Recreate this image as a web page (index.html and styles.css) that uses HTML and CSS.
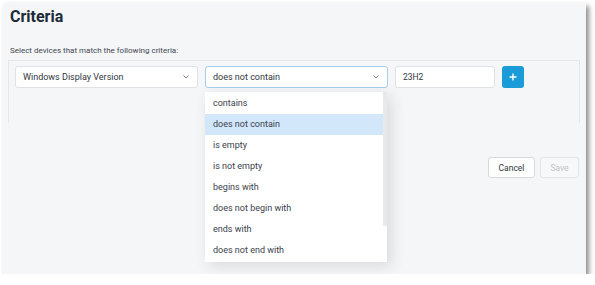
FILE: index.html
```html
<!DOCTYPE html>
<html>
<head>
<meta charset="utf-8">
<link rel="stylesheet" href="styles.css">
</head>
<body>
<div class="panel">
  <h1 class="title">Criteria</h1>
  <p class="subtitle">Select devices that match the following criteria:</p>
  <div class="criteria-box">
    <div class="row">
      <div class="select">
        <span>Windows Display Version</span>
        <svg class="chev" width="6" height="4" viewBox="0 0 6 4"><polyline points="0.5,0.5 3,3 5.5,0.5" fill="none" stroke="#7a8088" stroke-width="1"/></svg>
      </div>
      <div class="select-wrap">
        <div class="select focused">
          <span>does not contain</span>
          <svg class="chev" width="6" height="4" viewBox="0 0 6 4"><polyline points="0.5,0.5 3,3 5.5,0.5" fill="none" stroke="#7a8088" stroke-width="1"/></svg>
        </div>
        <div class="menu">
          <div class="menu-list">
            <div class="item">contains</div>
            <div class="item active">does not contain</div>
            <div class="item">is empty</div>
            <div class="item">is not empty</div>
            <div class="item">begins with</div>
            <div class="item">does not begin with</div>
            <div class="item">ends with</div>
            <div class="item">does not end with</div>
          </div>
          <div class="scroll"><div class="thumb"></div></div>
        </div>
      </div>
      <div class="input">23H2</div>
      <button class="add">
        <svg width="8" height="8" viewBox="0 0 8 8"><path d="M4 0.5V7.5M0.5 4H7.5" stroke="#fff" stroke-width="1.4"/></svg>
      </button>
    </div>
  </div>
  <div class="actions">
    <button class="btn cancel">Cancel</button>
    <button class="btn save">Save</button>
  </div>
</div>
</body>
</html>
```

FILE: styles.css
```css
* { box-sizing: border-box; }
html, body { margin: 0; padding: 0; background: #fff; }
body { font-family: Roboto, "Liberation Sans", sans-serif; }

.panel {
  margin: 3px 0 0 3px;
  width: 583px;
  height: 271px;
  background: #f5f6f8;
  box-shadow: 3px 3px 5px rgba(0,0,0,0.45);
  padding: 4px 6px 0 5px;
}

.title {
  margin: 0 0 0 2px;
  font-size: 16px;
  line-height: 20px;
  font-weight: 700;
  color: #1c2a37;
}

.subtitle {
  margin: 19px 0 0 2px;
  font-size: 8px;
  line-height: 10px;
  color: #3e4650;
}

.criteria-box {
  margin-top: 4px;
  height: 63px;
  border: 1px solid #e4e6e9;
  border-bottom: none;
  padding: 5px 6px 0 6px;
}

.row {
  display: flex;
  gap: 7px;
  align-items: flex-start;
}

.select-wrap { position: relative; }

.select {
  width: 183px;
  height: 22px;
  background: #fff;
  border: 1px solid #dfe1e4;
  border-radius: 3px;
  display: flex;
  align-items: center;
  justify-content: space-between;
  padding: 0 8px 0 7px;
  font-size: 9px;
  color: #2f3740;
}
.select.focused { border-color: #a9cdea; }
.chev { display: block; }

.input {
  width: 100px;
  height: 22px;
  background: #fff;
  border: 1px solid #dfe1e4;
  border-radius: 3px;
  font-size: 8.5px;
  color: #2f3740;
  display: flex;
  align-items: center;
  padding-left: 7px;
}

.add {
  width: 22px;
  height: 22px;
  border: none;
  border-radius: 3px;
  background: #1b9bd8;
  display: flex;
  align-items: center;
  justify-content: center;
  padding: 0;
}

.menu {
  position: absolute;
  top: 26px;
  left: 0;
  width: 182px;
  height: 170px;
  background: #fff;
  box-shadow: 4px 4px 14px rgba(40,50,60,0.14);
  display: flex;
  padding: 1px 0;
  z-index: 2;
}
.menu-list { flex: 1; }
.item {
  height: 21px;
  line-height: 21px;
  padding-left: 8px;
  font-size: 9px;
  color: #39414a;
}
.item.active { background: #d3e7fb; }
.scroll { width: 4px; margin: -1px 0; }
.thumb { height: 134px; background: #e8e9eb; }

.actions {
  display: flex;
  justify-content: flex-end;
  gap: 5px;
  margin-top: 34px;
  padding-right: 1px;
}
.btn {
  height: 21px;
  border-radius: 3px;
  font-family: Roboto, "Liberation Sans", sans-serif;
  font-size: 8.5px;
  padding: 0;
}
.cancel {
  width: 47px;
  background: #fff;
  border: 1px solid #d6d8db;
  color: #2f3740;
}
.save {
  width: 39px;
  background: #f7f8f9;
  border: 1px solid #e3e5e7;
  color: #bfc3c8;
}
```
